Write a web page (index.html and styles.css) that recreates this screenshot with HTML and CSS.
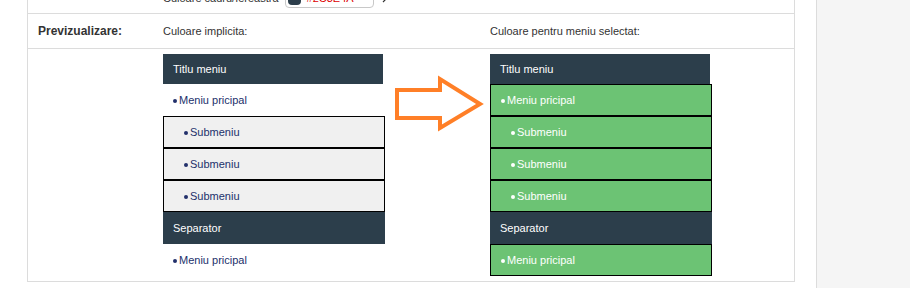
FILE: index.html
```html
<!DOCTYPE html>
<html lang="ro">
<head>
    <meta charset="UTF-8">
    <meta name="viewport" content="width=device-width, initial-scale=1.0">
    <title>Setari meniu</title>
    <link rel="stylesheet" href="styles.css">
</head>
<body>

    <div class="page">
        <!-- Main settings -->
        <div class="main">
            <div class="settings">

                <div class="row row-color">
                    <div class="label"></div>
                    <div class="value">
                        <span>Culoare cadru/fereastra</span>
                        <span class="color-input">
                            <span class="swatch"></span>
                            <span class="hex">#2C3E4A</span>
                        </span>
                        <svg class="picker" width="10" height="10" viewBox="0 0 10 10">
                            <path d="M1 9 L6 4 M5 3 L7 5 M6.5 2.5 L8 1 L9 2 L7.5 3.5" stroke="#333" stroke-width="1.2" fill="none"/>
                        </svg>
                    </div>
                </div>

                <div class="row row-head">
                    <div class="label">Previzualizare:</div>
                    <div class="preview-grid">
                        <div>Culoare implicita:</div>
                        <div></div>
                        <div>Culoare pentru meniu selectat:</div>
                    </div>
                </div>

                <div class="row row-preview">
                    <div class="label"></div>
                    <div class="preview-grid">

                        <!-- Default colors -->
                        <ul class="menu">
                            <li class="title">Titlu meniu</li>
                            <li class="item">Meniu pricipal</li>
                            <li class="item sub">Submeniu</li>
                            <li class="item sub">Submeniu</li>
                            <li class="item sub">Submeniu</li>
                            <li class="title sep">Separator</li>
                            <li class="item">Meniu pricipal</li>
                        </ul>

                        <div class="arrow">
                            <svg width="105" height="130" viewBox="0 0 105 130">
                                <polygon points="12,36 55,36 55,25 95,50 55,74 55,64 12,64" fill="none" stroke="#ff7f27" stroke-width="4" stroke-linejoin="miter"/>
                            </svg>
                        </div>

                        <!-- Selected colors -->
                        <ul class="menu selected">
                            <li class="title">Titlu meniu</li>
                            <li class="item">Meniu pricipal</li>
                            <li class="item sub">Submeniu</li>
                            <li class="item sub">Submeniu</li>
                            <li class="item sub">Submeniu</li>
                            <li class="title sep">Separator</li>
                            <li class="item">Meniu pricipal</li>
                        </ul>

                    </div>
                </div>

            </div>
        </div>

        <!-- Right panel -->
        <div class="side"></div>
    </div>

</body>
</html>
```

FILE: styles.css
```css
body {
    font-family: 'Liberation Sans', Arial, sans-serif;
    font-size: 11px;
    color: #333;
    margin: 0;
    padding: 0;
    background-color: #fff;
    overflow: hidden;
}

.page {
    display: flex;
    height: 288px;
}

.main {
    flex: 1;
    padding-left: 27px;
}

.side {
    width: 93px;
    background-color: #f5f5f5;
    border-left: 1px solid #dcdcdc;
}

.settings {
    width: 766px;
    margin-top: -21px;
    border: 1px solid #dcdcdc;
    border-top: none;
}

.row {
    display: flex;
    border-bottom: 1px solid #dcdcdc;
}

.row:last-child {
    border-bottom: none;
}

.label {
    width: 125px;
    padding-left: 10px;
    font-weight: bold;
    font-size: 12px;
    flex-shrink: 0;
}

/* Top row (cut by the window) */
.row-color {
    height: 35px;
    padding-top: 4px;
    box-sizing: border-box;
    align-items: center;
}

.row-color .value {
    display: flex;
    align-items: center;
    gap: 6px;
}

.color-input {
    display: flex;
    align-items: center;
    gap: 6px;
    width: 89px;
    height: 20px;
    padding-left: 2px;
    border: 1px solid #c8c8c8;
    border-radius: 4px;
    box-sizing: border-box;
}

.swatch {
    width: 13px;
    height: 14px;
    border-radius: 4px;
    background-color: #2c3e4b;
}

.hex {
    color: #d00;
}

.picker {
    margin-left: 2px;
}

/* Header row */
.row-head {
    height: 34px;
    align-items: center;
}

.preview-grid {
    display: grid;
    grid-template-columns: 222px 105px 222px;
}

/* Preview row */
.row-preview {
    padding: 5px 0 5px;
}

.menu {
    list-style: none;
    margin: 0;
    padding: 0;
}

.menu li {
    height: 32px;
    line-height: 32px;
    box-sizing: border-box;
    color: #22306b;
}

.menu .title {
    width: 220px;
    height: 30px;
    line-height: 30px;
    padding-left: 10px;
    background-color: #2c3e4b;
    color: #fff;
}

.menu .title.sep {
    width: 222px;
    height: 32px;
    line-height: 32px;
}

.menu .item {
    padding-left: 10px;
}

.menu .item::before {
    content: '';
    display: inline-block;
    width: 4px;
    height: 4px;
    border-radius: 50%;
    background-color: currentColor;
    margin-right: 2px;
    vertical-align: middle;
}

.menu .sub {
    padding-left: 20px;
    line-height: 30px;
    border: 1px solid #000;
    background-color: #f0f0f0;
}

.menu.selected .item {
    padding-left: 10px;
    line-height: 30px;
    border: 1px solid #000;
    background-color: #6cc374;
    color: #fff;
}

.menu.selected .sub {
    padding-left: 20px;
}

.arrow svg {
    display: block;
}
```
